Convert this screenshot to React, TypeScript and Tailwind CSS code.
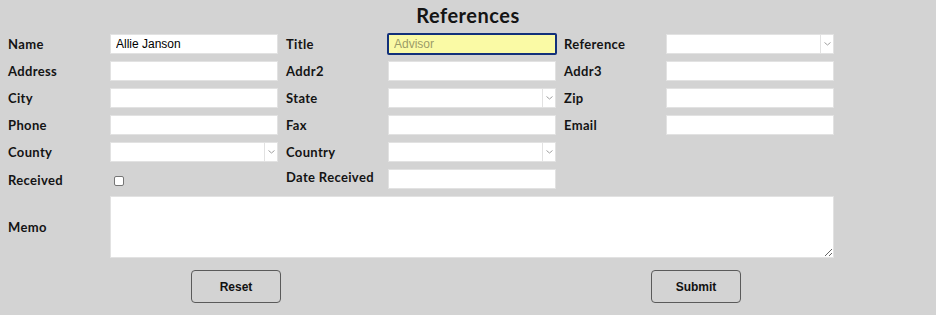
import React from "react";

const label = "text-[13px] font-bold tracking-[0.35px] text-[#141414] leading-none flex items-center";
const lf = { fontFamily: "Lato, 'Noto Sans', sans-serif" };
const inputCls = "h-[20px] w-[168px] bg-white border border-[#e2e2e2] px-[5px] text-[12px] text-black outline-none";
const inFont = { fontFamily: "'Liberation Sans', Arial, sans-serif" };

function Label({ children, first }: { children: React.ReactNode; first?: boolean }) {
  return (
    <div className={label + (first ? "" : " pl-[8px]")} style={lf}>
      {children}
    </div>
  );
}

function TextBox({ value }: { value?: string }) {
  return <input className={inputCls} style={inFont} defaultValue={value} />;
}

function Select() {
  return (
    <div className="h-[20px] w-[168px] bg-white border border-[#e2e2e2] flex">
      <div className="flex-1" />
      <div className="w-[13px] border-l border-[#e2e2e2] flex items-center justify-center">
        <svg width="7" height="4" viewBox="0 0 7 4">
          <path d="M0.5 0.5 L3.5 3 L6.5 0.5" fill="none" stroke="#a0a0a0" strokeWidth="1" />
        </svg>
      </div>
    </div>
  );
}

export default function App() {
  return (
    <div className="w-[936px] h-[315px] bg-[#d3d3d3] overflow-hidden">
      <div className="h-[34px] flex justify-center pt-[3px]">
        <div className="text-[20px] font-bold leading-[24px] tracking-[0.5px] text-[#141414]" style={lf}>
          References
        </div>
      </div>
      <div className="pl-[8px] grid grid-cols-[102px_168px_110px_168px_110px_168px] auto-rows-[20px] gap-y-[7px]">
        <Label first>Name</Label>
        <TextBox value="Allie Janson" />
        <Label>Title</Label>
        <input
          className="h-[22px] w-[170px] -ml-px -mt-px bg-[#fafaa5] border-2 border-[#12307a] rounded-[2px] px-[5px] text-[12px] outline-none placeholder:text-[#9c9c68]"
          style={inFont}
          placeholder="Advisor"
        />
        <Label>Reference</Label>
        <Select />

        <Label first>Address</Label>
        <TextBox />
        <Label>Addr2</Label>
        <TextBox />
        <Label>Addr3</Label>
        <TextBox />

        <Label first>City</Label>
        <TextBox />
        <Label>State</Label>
        <Select />
        <Label>Zip</Label>
        <TextBox />

        <Label first>Phone</Label>
        <TextBox />
        <Label>Fax</Label>
        <TextBox />
        <Label>Email</Label>
        <TextBox />

        <Label first>County</Label>
        <Select />
        <Label>Country</Label>
        <Select />
        <div />
        <div />

        <div className={label + " pt-[2px]"} style={lf}>Received</div>
        <div className="flex items-center pl-[4px] pt-[3px]">
          <div className="w-[10px] h-[10px] bg-white border border-[#767676] rounded-[2px]" />
        </div>
        <div className={label + " pl-[8px] -mt-[4px]"} style={lf}>Date Received</div>
        <TextBox />
        <div />
        <div />
      </div>
      <div className="pl-[8px] mt-[7px] flex">
        <div className={label + " w-[102px]"} style={lf}>Memo</div>
        <textarea className="h-[62px] w-[724px] bg-white border border-[#e2e2e2] outline-none block" />
      </div>
      <div className="mt-[12px] pl-[191px] flex gap-[370px]">
        <button
          className="w-[90px] h-[33px] rounded-[4px] border border-[#5a5a5a] text-[12px] font-bold text-[#111] bg-transparent"
          style={inFont}
        >
          Reset
        </button>
        <button
          className="w-[90px] h-[33px] rounded-[4px] border border-[#5a5a5a] text-[12px] font-bold text-[#111] bg-transparent"
          style={inFont}
        >
          Submit
        </button>
      </div>
    </div>
  );
}
